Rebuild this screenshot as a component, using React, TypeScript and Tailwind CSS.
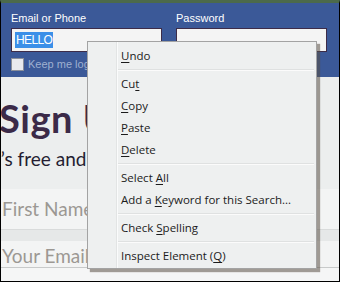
import React from 'react'

type Item = { pre: string; key: string; post: string } | 'sep'

const items: Item[] = [
  { pre: '', key: 'U', post: 'ndo' },
  'sep',
  { pre: 'Cu', key: 't', post: '' },
  { pre: '', key: 'C', post: 'opy' },
  { pre: '', key: 'P', post: 'aste' },
  { pre: '', key: 'D', post: 'elete' },
  'sep',
  { pre: 'Select ', key: 'A', post: 'll' },
  { pre: 'Add a ', key: 'K', post: 'eyword for this Search...' },
  'sep',
  { pre: 'Check ', key: 'S', post: 'pelling' },
  'sep',
  { pre: 'Inspect Element (', key: 'Q', post: ')' },
]

function ContextMenu() {
  return (
    <div className="absolute left-[86px] top-[38px] w-[230px] border border-[#a3a3a3] bg-[#eef0f0] pt-[3px] pb-[1px] shadow-[3px_3px_1px_rgba(90,80,70,0.55)]">
      {/* gutter line */}
      <div className="absolute left-[28px] top-0 bottom-0 w-[2px] border-l border-[#e2e4e4] bg-[#fafbfb]" />
      {items.map((it, i) =>
        it === 'sep' ? (
          <div key={i} className="flex h-[6px] items-center pl-[30px] pr-[2px]">
            <div className="h-[2px] w-full border-t border-[#dfe1e1] bg-[#fbfbfb]" />
          </div>
        ) : (
          <div
            key={i}
            className="relative flex h-[22px] items-center pl-[33px] text-[11.5px] leading-none text-[#1b1b1b]"
            style={{ fontFamily: '"Open Sans", "Liberation Sans", sans-serif' }}
          >
            <span className="whitespace-pre">
              {it.pre}
              <span className="underline underline-offset-2">{it.key}</span>
              {it.post}
            </span>
          </div>
        )
      )}
    </div>
  )
}

export default function App() {
  return (
    <div className="relative h-[282px] w-[340px] overflow-hidden border-x border-b border-black border-t-[3px] border-t-[#4c6a4b] bg-[#eceeee]">
      {/* Header */}
      <div
        className="flex h-[74px] gap-[14px] bg-[#3b5998] px-[10px] pt-[9px] text-[11px] text-white"
        style={{ fontFamily: '"Liberation Sans", Arial, sans-serif' }}
      >
        <div className="flex w-[151px] flex-col">
          <span className="leading-[12px]">Email or Phone</span>
          <div className="mt-[4px] flex h-[24px] items-center border border-[#3d2c48] bg-[#f4f4f4] px-[3px]">
            <span className="bg-[#3b8fe8] px-[1px] text-[12px] leading-[16px] tracking-[-0.6px] text-white">
              HELLO
            </span>
          </div>
          <div className="mt-[4px] flex items-center gap-[4px] text-[#9fb0d0]">
            <span className="h-[13px] w-[13px] border border-[#8a8f9a] bg-[#e8eaee]" />
            <span>Keep me logged in</span>
          </div>
        </div>
        <div className="flex w-[151px] flex-col">
          <span className="leading-[12px]">Password</span>
          <div className="mt-[4px] h-[24px] border border-[#3d2c48] bg-[#f4f4f4]" />
        </div>
      </div>

      {/* Body */}
      <div style={{ fontFamily: 'Lato, "Open Sans", sans-serif' }}>
        <div className="-ml-[2px] mt-[20px] whitespace-nowrap text-[38px] font-bold leading-[42px] tracking-[0.5px] text-[#3b2a48]">
          Sign Up
        </div>
        <div className="-ml-[12px] mt-[9px] whitespace-nowrap text-[19px] leading-[22px] text-[#241d31]">
          It’s free and always will be.
        </div>
        <div className="mt-[19px] flex h-[41px] items-center border-b border-[#d9dbdb] bg-[#f3f4f4] pl-[1px] text-[19px] text-[#9c9893]">
          First Name
        </div>
        <div className="h-[11px] bg-[#e6e8e8]" />
        <div className="flex h-[27px] items-end border-b border-[#c8caca] bg-[#f3f4f4] pl-[1px] text-[19px] leading-[22px] text-[#9c9893]">
          Your Email
        </div>
        <div className="h-[14px] bg-[#f5f6f6]" />
      </div>

      <ContextMenu />
    </div>
  )
}
